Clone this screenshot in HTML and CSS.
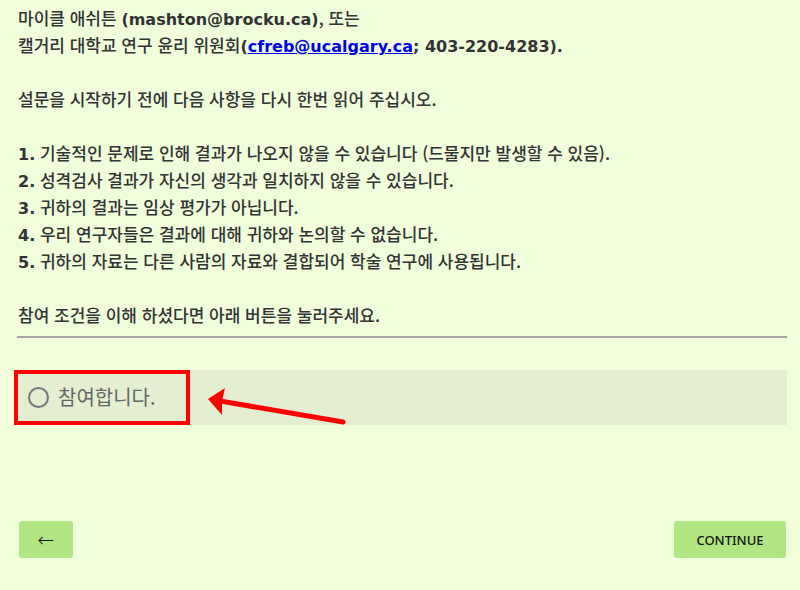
FILE: index.html
```html
<!DOCTYPE html>
<html lang="ko">
<head>
  <meta charset="UTF-8">
  <title>설문 참여 동의</title>
  <link rel="stylesheet" href="styles.css">
</head>
<body>
  <div class="page">
    <div class="consent">
      <p>마이클 애쉬튼 <b>(mashton@brocku.ca)</b>, 또는</p>
      <p>캘거리 대학교 연구 윤리 위원회<b>(<a href="#">cfreb@ucalgary.ca</a>; 403-220-4283).</b></p>
      <p class="blank"></p>
      <p>설문을 시작하기 전에 다음 사항을 다시 한번 읽어 주십시오.</p>
      <p class="blank"></p>
      <p><b>1.</b> 기술적인 문제로 인해 결과가 나오지 않을 수 있습니다 (드물지만 발생할 수 있음).</p>
      <p><b>2.</b> 성격검사 결과가 자신의 생각과 일치하지 않을 수 있습니다.</p>
      <p><b>3.</b> 귀하의 결과는 임상 평가가 아닙니다.</p>
      <p><b>4.</b> 우리 연구자들은 결과에 대해 귀하와 논의할 수 없습니다.</p>
      <p><b>5.</b> 귀하의 자료는 다른 사람의 자료와 결합되어 학술 연구에 사용됩니다.</p>
      <p class="blank"></p>
      <p>참여 조건을 이해 하셨다면 아래 버튼을 눌러주세요.</p>
    </div>

    <hr class="divider">

    <div class="choices">
      <label class="choice">
        <span class="radio"></span>
        <span class="choice-text">참여합니다.</span>
      </label>
      <!-- annotation arrow -->
      <svg class="arrow" width="150" height="40" viewBox="0 0 150 40">
        <line x1="137" y1="32" x2="14" y2="11" stroke="#ff0000" stroke-width="5" stroke-linecap="round"/>
        <polygon points="2,9 19,-2 16,11 16,25" fill="#ff0000"/>
      </svg>
    </div>

    <div class="nav">
      <button class="btn back">&larr;</button>
      <button class="btn next">CONTINUE</button>
    </div>
  </div>
</body>
</html>
```

FILE: styles.css
```css
body {
  margin: 0;
  background: #f0fedc;
  color: #333;
  font-family: "Noto Sans CJK KR", "Noto Sans", sans-serif;
  overflow: hidden;
}
.page {
  padding: 4px 13px 0 18px;
}
.consent {
  font-size: 17px;
  font-weight: 500;
}
.consent p {
  margin: 0;
  height: 27px;
  line-height: 27px;
  white-space: nowrap;
}
.consent b {
  font-family: "DejaVu Sans", "Noto Sans CJK KR", sans-serif;
  font-size: 16px;
  font-weight: 700;
}
.consent a {
  color: #0000ee;
}
.divider {
  margin: 8px 0 0 -1px;
  border: none;
  border-top: 2px solid #a3a3a3;
}
.choices {
  position: relative;
  margin: 32px 0 0 -4px;
  background: #e3efd0;
  height: 55px;
}
.choice {
  display: flex;
  align-items: center;
  gap: 9px;
  width: 176px;
  height: 55px;
  box-sizing: border-box;
  border: 4px solid #ff0000;
  padding-left: 10px;
}
.radio {
  width: 17px;
  height: 17px;
  border: 2px solid #777;
  border-radius: 50%;
}
.choice-text {
  font-size: 20px;
  color: #666;
  margin-top: -3px;
}
.arrow {
  position: absolute;
  left: 192px;
  top: 20px;
  overflow: visible;
}
.nav {
  display: flex;
  justify-content: space-between;
  margin: 96px 1px 0 1px;
}
.btn {
  height: 37px;
  border: none;
  border-radius: 3px;
  background: #b0e783;
  color: #111;
  font-family: "Noto Sans", sans-serif;
  font-size: 13px;
  cursor: pointer;
}
.back {
  width: 54px;
  font-size: 20px;
  font-family: "DejaVu Sans", sans-serif;
  font-weight: 300;
}
.next {
  width: 112px;
  font-weight: 500;
}
```
